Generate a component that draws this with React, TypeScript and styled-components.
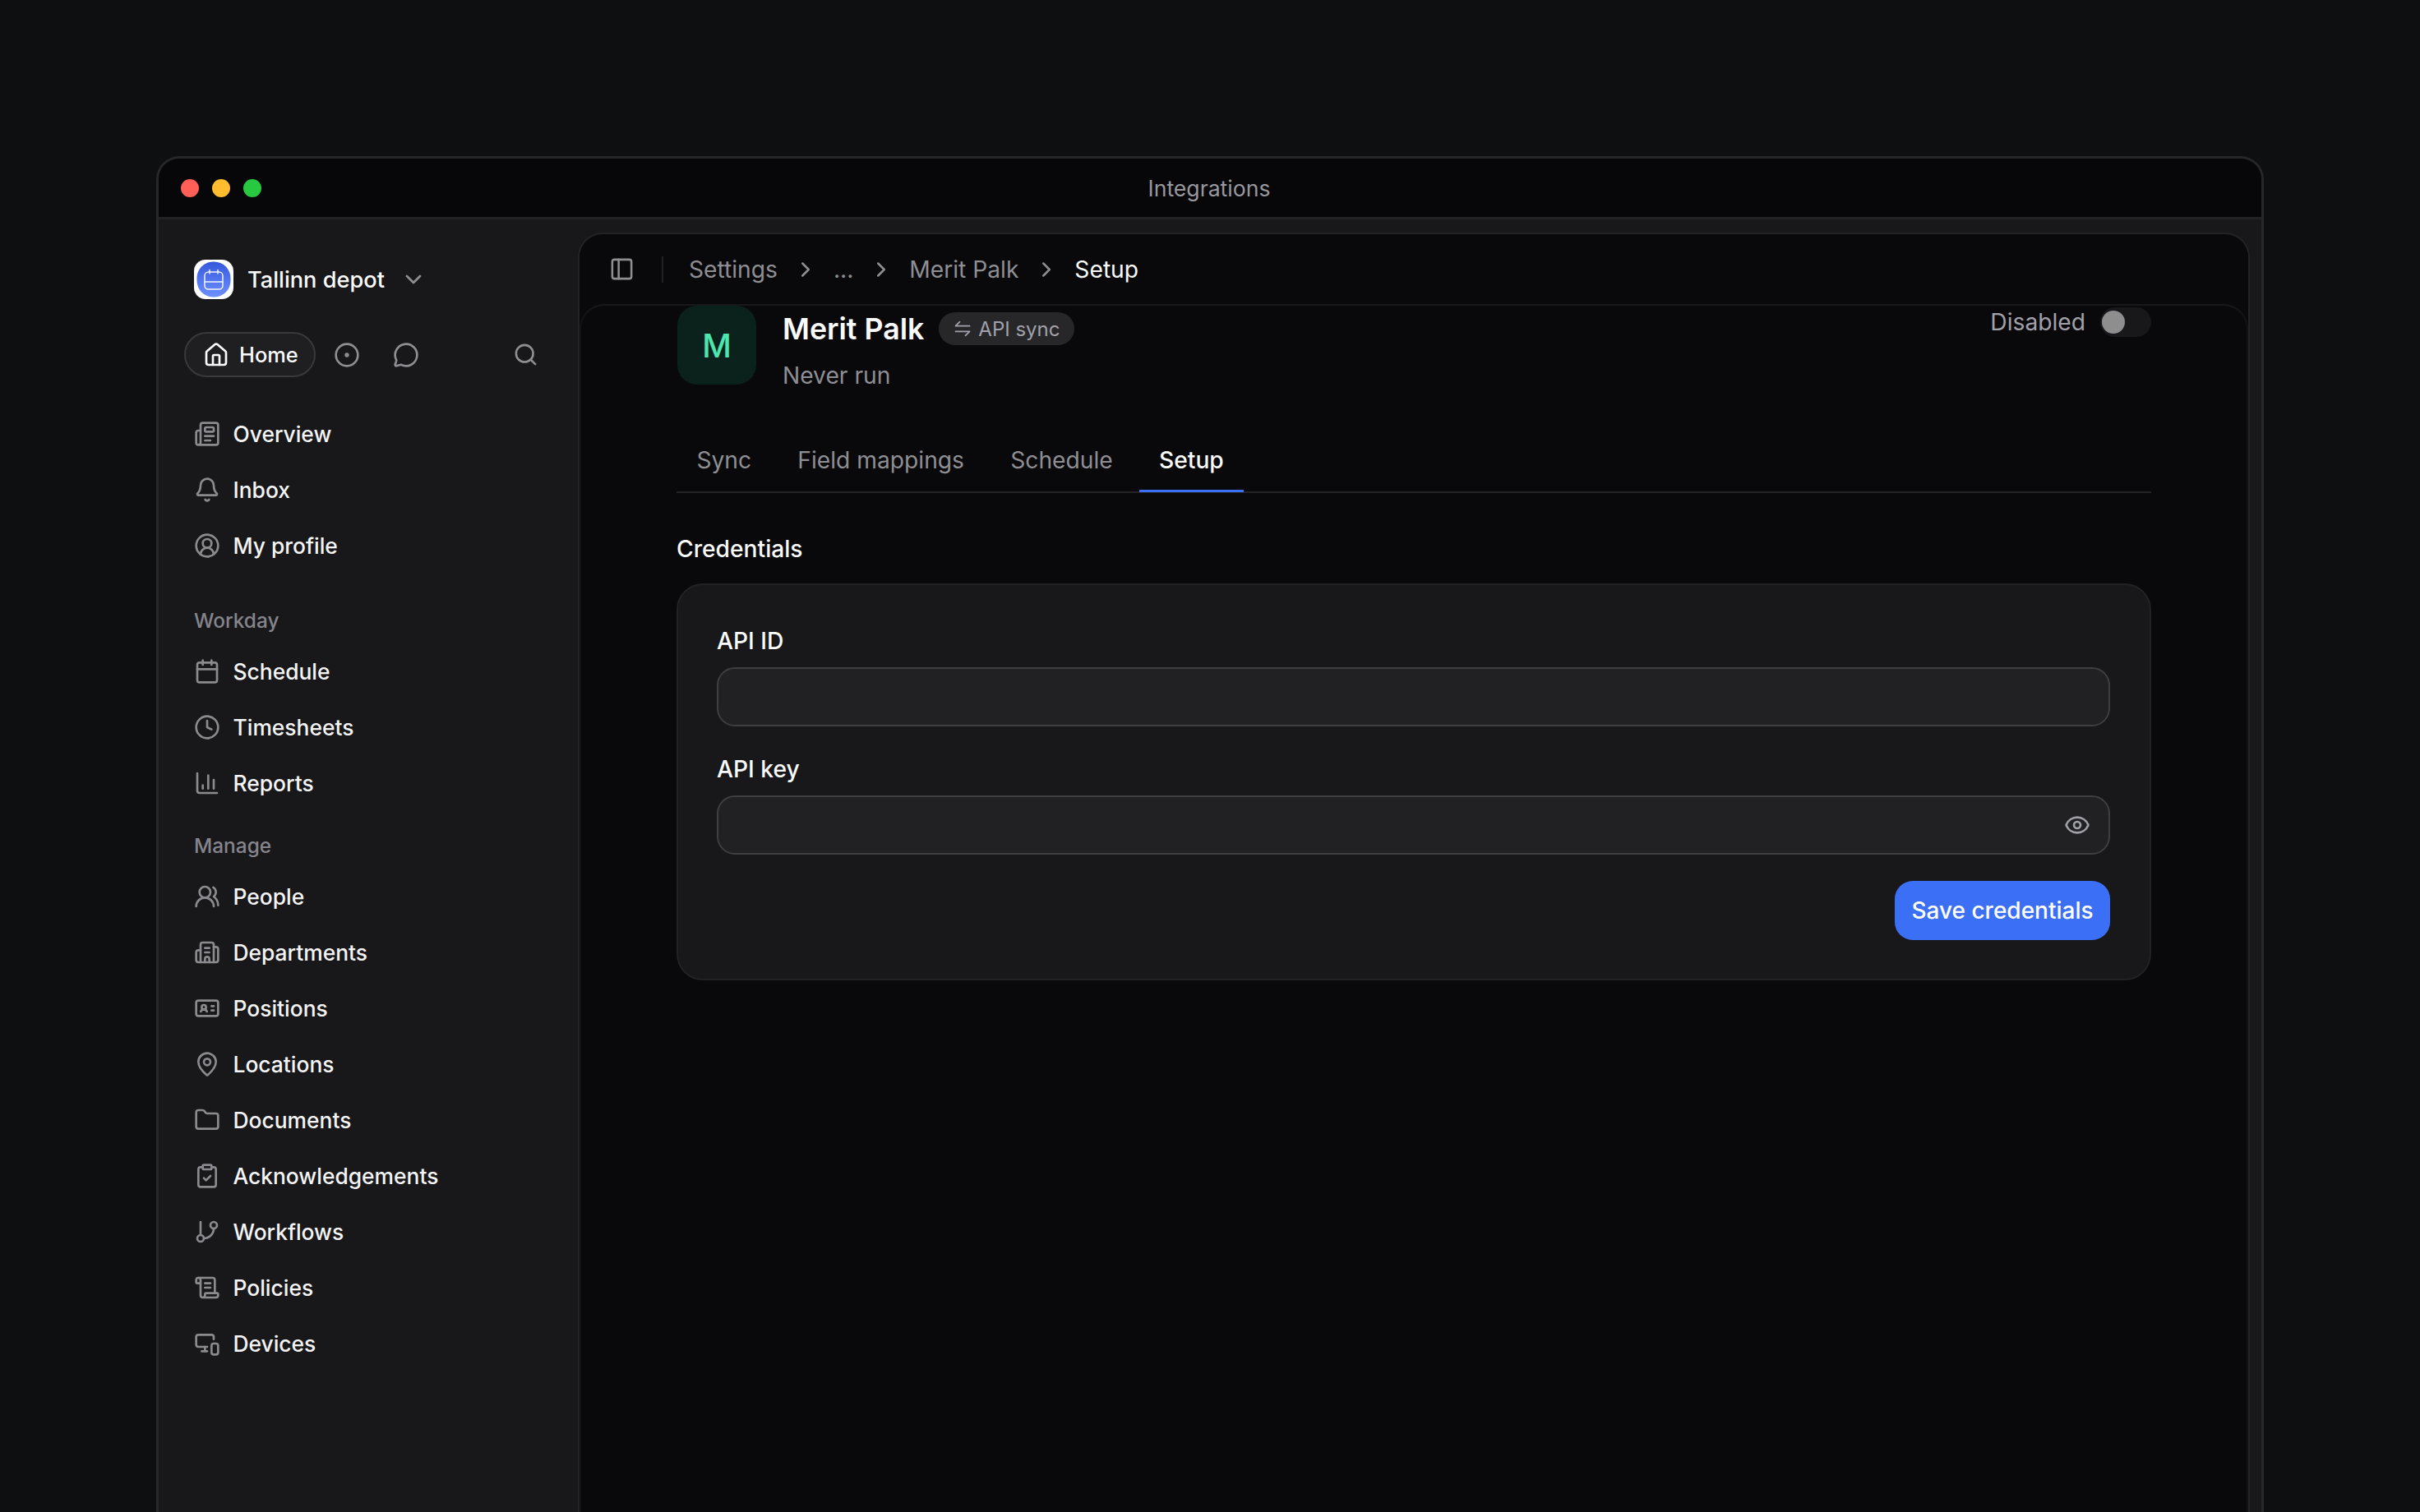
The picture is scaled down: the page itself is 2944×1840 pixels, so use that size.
import { FunctionComponent, ReactNode } from 'react';
import styled, { createGlobalStyle } from 'styled-components';
import {
    Bell, Building2, Calendar, ChartColumn, ChevronDown, ChevronRight, CircleDot,
    CircleUserRound, ClipboardCheck, Clock, Eye, Folder, GitBranch, House, IdCard, MapPin,
    MessageCircle, MonitorSmartphone, Newspaper, PanelLeft, ScrollText, Search, UsersRound,
} from 'lucide-react';

const GlobalStyle = createGlobalStyle`
    * { box-sizing: border-box; }
    html, body { margin: 0; padding: 0; background: #0e0f11; }
    body { font-family: Inter, "Noto Sans", sans-serif; -webkit-font-smoothing: antialiased; }
`;

const Page = styled.div`
    width: 2944px;
    height: 1840px;
    padding: 190px 190px 0;
    overflow: hidden;
    background: #0e0f11;
`;

const Window = styled.div`
    height: 1650px;
    display: flex;
    flex-direction: column;
    border: 3px solid #27272a;
    border-bottom: 0;
    border-radius: 28px 28px 0 0;
    background: #18181b;
    overflow: hidden;
`;

const TitleBar = styled.div`
    position: relative;
    height: 74px;
    flex: none;
    display: flex;
    align-items: center;
    justify-content: center;
    background: #070709;
    border-bottom: 3px solid #232326;
`;

const Lights = styled.div`
    position: absolute;
    left: 27px;
    top: 25px;
    display: flex;
    gap: 16px;
`;

const Light = styled.span<{ $color: string }>`
    width: 22px;
    height: 22px;
    border-radius: 50%;
    background: ${p => p.$color};
`;

const WindowTitle = styled.div`
    font-size: 26.6px;
    color: #98989e;
    margin-left: -2px;
`;

const Body = styled.div`
    flex: 1;
    display: flex;
    min-height: 0;
`;

const Sidebar = styled.aside`
    width: 510px;
    flex: none;
    padding: 49px 0 0 43px;
    color: #fafafa;
`;

const Workspace = styled.div`
    display: flex;
    align-items: center;
    height: 48px;
    font-size: 27.2px;
    font-weight: 450;
    gap: 17px;
    svg.chevron { margin-left: 2px; color: #8e8e93; }
`;

const QuickRow = styled.div`
    display: flex;
    align-items: center;
    margin: 40px 0 0 -12px;
    height: 55px;
    color: #8e8e93;
`;

const HomePill = styled.div`
    display: flex;
    align-items: center;
    gap: 12px;
    width: 160px;
    height: 55px;
    padding-left: 21px;
    border: 2px solid #39393c;
    border-radius: 28px;
    background: #1f1f22;
    color: #fafafa;
    font-size: 25.4px;
    font-weight: 450;
    margin-right: 22px;
`;

const QuickIcon = styled.div<{ $left: number }>`
    display: flex;
    margin-left: ${p => p.$left}px;
`;

const NavGroup = styled.div<{ $top: number }>`
    margin-top: ${p => p.$top}px;
`;

const SectionLabel = styled.div`
    height: 30px;
    line-height: 30px;
    margin-bottom: 13px;
    font-size: 24.4px;
    font-weight: 450;
    color: #85858b;
`;

const NavRow = styled.div`
    display: flex;
    align-items: center;
    height: 68px;
    gap: 15.5px;
    font-size: 26.4px;
    font-weight: 450;
    color: #f4f4f5;
    svg { flex: none; color: #8a8a8f; }
`;

const Panel = styled.main`
    flex: 1;
    display: flex;
    flex-direction: column;
    margin: 16px 14px 0 0;
    border: 2px solid #232326;
    border-bottom: 0;
    border-radius: 30px 30px 0 0;
    background: #09090b;
    overflow: hidden;
`;

const Breadcrumbs = styled.div`
    height: 85px;
    flex: none;
    display: flex;
    align-items: center;
    padding-left: 36px;
    font-size: 28.2px;
    color: #8e8e93;
    svg.chev { margin: 0 19px; width: 30px; height: 30px; }
`;

const Divider = styled.div`
    width: 2px;
    height: 32px;
    margin: 0 31px 0 33px;
    background: #232326;
`;

const Crumb = styled.span<{ $active?: boolean }>`
    color: ${p => (p.$active ? '#fafafa' : '#8e8e93')};
`;

const Content = styled.div`
    flex: 1;
    border-top: 2px solid #18181b;
    border-radius: 30px 30px 0 0;
    padding: 0 118px;
    overflow: hidden;
    box-shadow: inset 2px 0 0 #121214, inset -2px 0 0 #121214;
`;

const Header = styled.div`
    display: flex;
    align-items: flex-start;
`;

const Avatar = styled.div`
    width: 96px;
    height: 96px;
    flex: none;
    display: flex;
    align-items: center;
    justify-content: center;
    margin-left: 1px;
    border-radius: 24px;
    background: #0a211c;
    color: #4ee5ae;
    font-size: 39px;
    font-weight: 500;
`;

const HeaderText = styled.div`
    margin-left: 32px;
    padding-top: 6px;
`;

const TitleRow = styled.div`
    display: flex;
    align-items: center;
    height: 44px;
    gap: 18px;
`;

const Title = styled.h1`
    margin: 0;
    font-size: 35.7px;
    font-weight: 600;
    color: #fafafa;
`;

const Badge = styled.span`
    display: flex;
    align-items: center;
    gap: 9px;
    height: 40px;
    padding: 0 18px 0 19px;
    border-radius: 20px;
    background: #27272a;
    color: #a1a1aa;
    font-size: 24px;
`;

const SubTitle = styled.div`
    margin-top: 13px;
    line-height: 44px;
    font-size: 28.2px;
    color: #8e8e93;
`;

const StatusBox = styled.div`
    margin: 2px 0 0 auto;
    display: flex;
    align-items: center;
    gap: 18px;
    font-size: 28.2px;
    color: #a1a1aa;
`;

const Toggle = styled.div`
    width: 62px;
    height: 36px;
    padding: 4px 2px;
    border-radius: 18px;
    background: #18181b;
`;

const Thumb = styled.div`
    width: 28px;
    height: 28px;
    border-radius: 50%;
    background: #8e8e8e;
`;

const Tabs = styled.div`
    display: flex;
    gap: 7.5px;
    margin-top: 45px;
    height: 76px;
    border-bottom: 2px solid #232326;
`;

const Tab = styled.div<{ $active?: boolean }>`
    display: flex;
    align-items: center;
    height: 75px;
    padding: 0 24.4px 0;
    font-size: 28.2px;
    font-weight: ${p => (p.$active ? 450 : 400)};
    color: ${p => (p.$active ? '#fafafa' : '#8e8e93')};
    border-bottom: 3px solid ${p => (p.$active ? '#3b6ff5' : 'transparent')};
`;

const SectionTitle = styled.h2`
    margin: 48px 0 22px;
    line-height: 40px;
    font-size: 28.2px;
    font-weight: 450;
    color: #fafafa;
`;

const Card = styled.div`
    display: flex;
    flex-direction: column;
    padding: 48px 48px 47px 47px;
    border: 2px solid #222225;
    border-radius: 32px;
    background: #18181b;
`;

const FieldLabel = styled.label`
    line-height: 40px;
    font-size: 28.2px;
    font-weight: 450;
    color: #fafafa;
`;

const Input = styled.div<{ $spaced?: boolean }>`
    display: flex;
    align-items: center;
    justify-content: flex-end;
    height: 72px;
    margin: 12px 0 ${p => (p.$spaced ? 32 : 0)}px;
    padding-right: 22px;
    border: 2px solid #3f3f42;
    border-radius: 22px;
    background: #212123;
    color: #a1a1aa;
`;

const SaveButton = styled.button`
    align-self: flex-end;
    height: 72px;
    width: 262px;
    margin-top: 32px;
    padding: 0;
    border: 0;
    border-radius: 22px;
    background: #3b6ff5;
    color: #fff;
    font-family: inherit;
    font-size: 28px;
    font-weight: 450;
`;

const WorkspaceLogo = () => (
    <svg width="48" height="48" viewBox="0 0 48 48" fill="none">
        <defs>
            <linearGradient id="logoFill" x1="0" y1="0" x2="0" y2="1">
                <stop offset="0" stopColor="#3558dc" />
                <stop offset="1" stopColor="#6f90ff" />
            </linearGradient>
        </defs>
        <rect width="48" height="48" rx="14" fill="#fff" />
        <rect x="3.5" y="2.5" width="41" height="43" rx="20" fill="url(#logoFill)" />
        <g stroke="#fff" strokeWidth="1.5" strokeLinecap="round" opacity="0.92">
            <rect x="13" y="15" width="22" height="21" rx="4.5" />
            <path d="M13 27h22M19 12.5v4.5M29 12.5v4.5" />
        </g>
    </svg>
);

// two half-headed arrows, the package only has full heads
const SwapIcon = () => (
    <svg width="20" height="20" viewBox="0 0 20 20" fill="none" stroke="currentColor" strokeWidth="1.8" strokeLinecap="round" strokeLinejoin="round">
        <path d="M1.5 6.7h17M1.5 6.7l5-5" />
        <path d="M18.5 13.3h-17M18.5 13.3l-5 5" />
    </svg>
);

type NavItem = { label: string; icon: ReactNode };

const ICON = { size: 32, strokeWidth: 2 };

const topItems: NavItem[] = [
    { label: 'Overview', icon: <Newspaper {...ICON} /> },
    { label: 'Inbox', icon: <Bell {...ICON} /> },
    { label: 'My profile', icon: <CircleUserRound {...ICON} /> },
];

const workdayItems: NavItem[] = [
    { label: 'Schedule', icon: <Calendar {...ICON} /> },
    { label: 'Timesheets', icon: <Clock {...ICON} /> },
    { label: 'Reports', icon: <ChartColumn {...ICON} /> },
];

const manageItems: NavItem[] = [
    { label: 'People', icon: <UsersRound {...ICON} /> },
    { label: 'Departments', icon: <Building2 {...ICON} /> },
    { label: 'Positions', icon: <IdCard {...ICON} /> },
    { label: 'Locations', icon: <MapPin {...ICON} /> },
    { label: 'Documents', icon: <Folder {...ICON} /> },
    { label: 'Acknowledgements', icon: <ClipboardCheck {...ICON} /> },
    { label: 'Workflows', icon: <GitBranch {...ICON} /> },
    { label: 'Policies', icon: <ScrollText {...ICON} /> },
    { label: 'Devices', icon: <MonitorSmartphone {...ICON} /> },
];

const NavList: FunctionComponent<{ items: NavItem[] }> = ({ items }) => (
    <>
        {items.map(item => (
            <NavRow key={item.label}>
                {item.icon}
                {item.label}
            </NavRow>
        ))}
    </>
);

export default function App() {
    return (
        <Page>
            <GlobalStyle />
            <Window>
                <TitleBar>
                    <Lights>
                        <Light $color="#ff5f57" />
                        <Light $color="#febc2e" />
                        <Light $color="#28c840" />
                    </Lights>
                    <WindowTitle>Integrations</WindowTitle>
                </TitleBar>
                <Body>
                    <Sidebar>
                        <Workspace>
                            <WorkspaceLogo />
                            Tallinn depot
                            <ChevronDown className="chevron" size={32} strokeWidth={2} />
                        </Workspace>
                        <QuickRow>
                            <HomePill>
                                <House size={32} strokeWidth={2} />
                                Home
                            </HomePill>
                            <QuickIcon $left={0}><CircleDot size={32} strokeWidth={2} /></QuickIcon>
                            <QuickIcon $left={40}><MessageCircle size={32} strokeWidth={2} /></QuickIcon>
                            <QuickIcon $left={114}><Search size={31} strokeWidth={2} /></QuickIcon>
                        </QuickRow>
                        <NavGroup $top={35}>
                            <NavList items={topItems} />
                        </NavGroup>
                        <NavGroup $top={42}>
                            <SectionLabel>Workday</SectionLabel>
                            <NavList items={workdayItems} />
                        </NavGroup>
                        <NavGroup $top={27}>
                            <SectionLabel>Manage</SectionLabel>
                            <NavList items={manageItems} />
                        </NavGroup>
                    </Sidebar>
                    <Panel>
                        <Breadcrumbs>
                            <PanelLeft size={31} strokeWidth={2} />
                            <Divider />
                            <Crumb>Settings</Crumb>
                            <ChevronRight className="chev" strokeWidth={2} />
                            <Crumb>...</Crumb>
                            <ChevronRight className="chev" strokeWidth={2} />
                            <Crumb>Merit Palk</Crumb>
                            <ChevronRight className="chev" strokeWidth={2} />
                            <Crumb $active>Setup</Crumb>
                        </Breadcrumbs>
                        <Content>
                            <Header>
                                <Avatar>M</Avatar>
                                <HeaderText>
                                    <TitleRow>
                                        <Title>Merit Palk</Title>
                                        <Badge>
                                            <SwapIcon />
                                            API sync
                                        </Badge>
                                    </TitleRow>
                                    <SubTitle>Never run</SubTitle>
                                </HeaderText>
                                <StatusBox>
                                    Disabled
                                    <Toggle><Thumb /></Toggle>
                                </StatusBox>
                            </Header>
                            <Tabs>
                                <Tab>Sync</Tab>
                                <Tab>Field mappings</Tab>
                                <Tab>Schedule</Tab>
                                <Tab $active>Setup</Tab>
                            </Tabs>
                            <SectionTitle>Credentials</SectionTitle>
                            <Card>
                                <FieldLabel>API ID</FieldLabel>
                                <Input $spaced />
                                <FieldLabel>API key</FieldLabel>
                                <Input>
                                    <Eye size={32} strokeWidth={2} />
                                </Input>
                                <SaveButton>Save credentials</SaveButton>
                            </Card>
                        </Content>
                    </Panel>
                </Body>
            </Window>
        </Page>
    );
}
